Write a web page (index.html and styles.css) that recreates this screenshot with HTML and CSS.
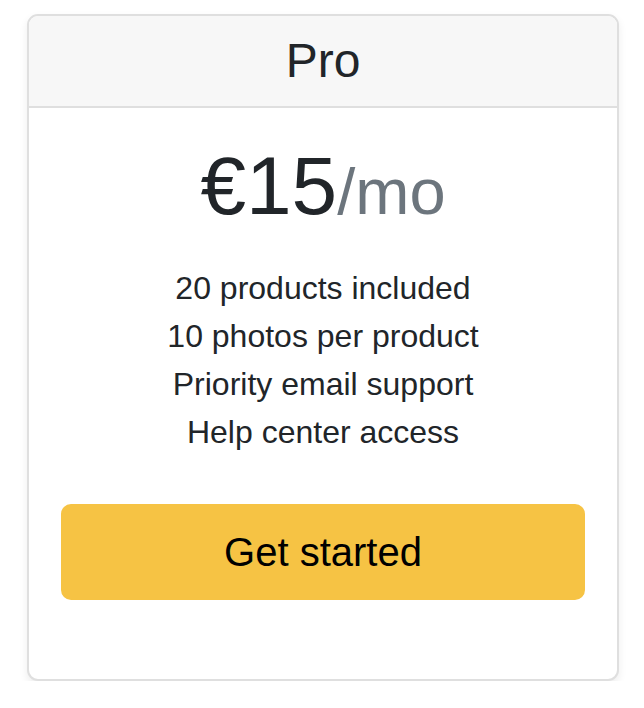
FILE: index.html
```html
<!DOCTYPE html>
<html lang="en">
<head>
<meta charset="utf-8">
<title>Pro</title>
<link rel="stylesheet" href="styles.css">
</head>
<body>
<div class="page">
  <div class="card">
    <div class="card-header">
      <h4 class="plan">Pro</h4>
    </div>
    <div class="card-body">
      <h1 class="price">€15<small class="per">/mo</small></h1>
      <ul class="features">
        <li>20 products included</li>
        <li>10 photos per product</li>
        <li>Priority email support</li>
        <li>Help center access</li>
      </ul>
      <button class="btn" type="button">Get started</button>
    </div>
  </div>
</div>
</body>
</html>
```

FILE: styles.css
```css
html, body {
  margin: 0;
  padding: 0;
  background: #fff;
}

body {
  font-family: "Liberation Sans", Arial, Helvetica, sans-serif;
  color: #212529;
}

.page {
  padding: 14px 25px 0 27px;
}

.card {
  box-sizing: border-box;
  height: 667px;
  border: 2px solid #dfdfdf;
  border-radius: 11px;
  background: #fff;
  box-shadow: 0 4px 8px rgba(0, 0, 0, 0.075);
  overflow: hidden;
  text-align: center;
  display: flex;
  flex-direction: column;
}

.card-header {
  background: #f7f7f7;
  border-bottom: 2px solid #dfdfdf;
  padding: 16px 32px;
}

.plan {
  margin: 0;
  font-size: 48px;
  font-weight: 400;
  line-height: 1.2;
}

.card-body {
  padding: 32px;
  display: flex;
  flex-direction: column;
}

.price {
  margin: 0;
  font-size: 82px;
  font-weight: 400;
  line-height: 92px;
}

.per {
  font-size: 65px;
  line-height: 0;
  color: #6c757d;
}

.features {
  list-style: none;
  margin: 32px 0 48px;
  padding: 0;
  font-size: 32px;
  line-height: 48px;
}

.btn {
  display: block;
  width: 100%;
  height: 96px;
  border: 2px solid #f6c344;
  border-radius: 10px;
  background: #f6c344;
  color: #000;
  font-family: inherit;
  font-size: 40px;
  line-height: 60px;
  padding: 16px 32px;
}
```
